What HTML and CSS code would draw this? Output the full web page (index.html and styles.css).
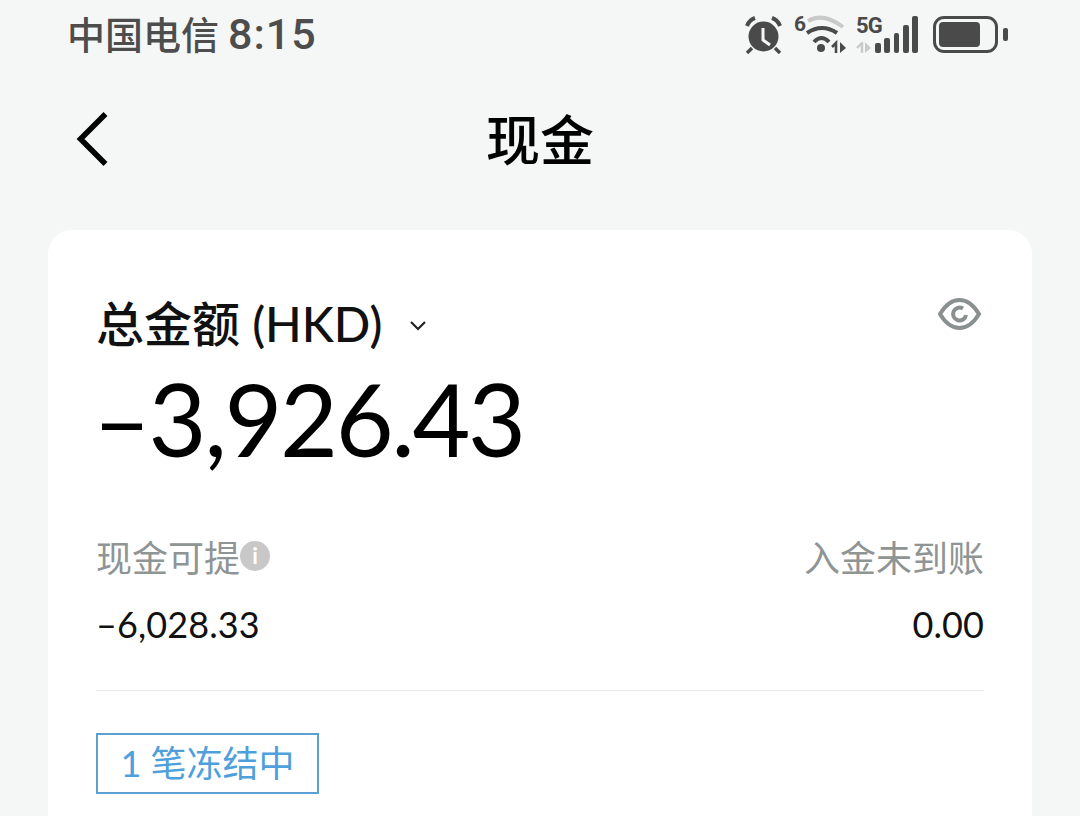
FILE: index.html
```html
<!DOCTYPE html>
<html lang="zh-CN">
<head>
    <meta charset="UTF-8">
    <meta name="viewport" content="width=device-width, initial-scale=1.0">
    <title>现金</title>
    <link rel="stylesheet" href="styles.css">
</head>
<body>

<div class="status">
    <div class="carrier">中国电信<span class="time">8:15</span></div>
    <div class="status-icons">
        <svg class="ico-alarm" width="37" height="38" viewBox="0 0 37 38">
            <circle cx="18.5" cy="20.5" r="15" fill="#4a4a4a"/>
            <path d="M2 10 Q4 4 10 2" fill="none" stroke="#4a4a4a" stroke-width="4"/>
            <path d="M35 10 Q33 4 27 2" fill="none" stroke="#4a4a4a" stroke-width="4"/>
            <path d="M7 32 L2 37 M30 32 L35 37" stroke="#4a4a4a" stroke-width="3.5"/>
            <path d="M18 12 V24 L25 29" fill="none" stroke="#f5f7f7" stroke-width="3"/>
        </svg>
        <div class="wifi">
            <span class="wifi-six">6</span>
            <svg width="44" height="40" viewBox="0 0 44 40">
                <path d="M3 7 Q18 -2 38 13" fill="none" stroke="#c9c9c9" stroke-width="4"/>
                <path d="M2 19 Q17 9 32 19" fill="none" stroke="#4a4a4a" stroke-width="4"/>
                <path d="M9 28 Q16.5 20 24 28" fill="none" stroke="#4a4a4a" stroke-width="4"/>
                <circle cx="16" cy="34" r="4" fill="#4a4a4a"/>
                <path d="M31 39 V29 L27 33" fill="none" stroke="#4a4a4a" stroke-width="2.6"/>
                <path d="M35 28 V39 L41 34 Z" fill="#4a4a4a"/>
            </svg>
        </div>
        <div class="signal">
            <div class="net">
                <span class="five-g">5G</span>
                <svg width="16" height="11" viewBox="0 0 16 11">
                    <path d="M6 11 V1 L1 6" fill="none" stroke="#c9c9c9" stroke-width="2.4"/>
                    <path d="M9 0 V11 L15 6 Z" fill="#c9c9c9"/>
                </svg>
            </div>
            <div class="bars">
                <span class="bar bar-1"></span>
                <span class="bar bar-2"></span>
                <span class="bar bar-3"></span>
                <span class="bar bar-4"></span>
                <span class="bar bar-5"></span>
            </div>
        </div>
        <div class="battery">
            <div class="battery-body"><div class="battery-fill"></div></div>
            <div class="battery-tip"></div>
        </div>
    </div>
</div>

<div class="nav">
    <svg class="back" width="34" height="56" viewBox="0 0 34 56">
        <path d="M30.5 3 L5.5 28 L30.5 53" fill="none" stroke="#000" stroke-width="5.5"/>
    </svg>
    <h1>现金</h1>
</div>

<div class="card">
    <div class="total-row">
        <div class="total-label">总金额 <span class="currency">(HKD)</span>
            <svg class="chevron" width="18" height="12" viewBox="0 0 18 12">
                <path d="M2 2 L9 9 L16 2" fill="none" stroke="#222" stroke-width="2.2"/>
            </svg>
        </div>
        <svg class="eye" width="44" height="32" viewBox="0 0 44 32">
            <path d="M2 16 C8 6 15 2 21.5 2 C28 2 35 6 41 16 C35 26 28 30 21.5 30 C15 30 8 26 2 16 Z" fill="none" stroke="#8a8f8f" stroke-width="4"/>
            <path d="M28 17 A6.5 6.5 0 1 1 25 10.5" fill="none" stroke="#8a8f8f" stroke-width="4"/>
        </svg>
    </div>
    <div class="total">–3,926.43</div>

    <div class="columns">
        <div class="col">
            <div class="col-label">现金可提<span class="info">i</span></div>
            <div class="col-value">–6,028.33</div>
        </div>
        <div class="col col-right">
            <div class="col-label">入金未到账</div>
            <div class="col-value">0.00</div>
        </div>
    </div>

    <div class="line"></div>

    <div class="tag">1 笔冻结中</div>
</div>

</body>
</html>
```

FILE: styles.css
```css
* {
    box-sizing: border-box;
}

html, body {
    height: 816px;
    overflow: hidden;
}

body {
    margin: 0;
    background: #f5f7f7;
    font-family: Lato, "Noto Sans CJK SC", sans-serif;
}

.status {
    height: 70px;
    padding: 0 72px 2px 67px;
    display: flex;
    justify-content: space-between;
    align-items: center;
}

.carrier {
    font-size: 38px;
    font-weight: 500;
    color: #4d4d4d;
    margin-bottom: 4px;
    display: flex;
    align-items: baseline;
}

.time {
    font-family: Roboto, sans-serif;
    font-size: 43px;
    font-weight: 500;
    letter-spacing: 1px;
    margin-left: 9px;
}

.status-icons {
    display: flex;
    align-items: flex-end;
    height: 40px;
}

.ico-alarm {
    margin-right: 12px;
}

.wifi {
    display: flex;
    align-items: flex-start;
    margin-right: 7px;
}

.wifi-six {
    font-family: Roboto, sans-serif;
    font-size: 21px;
    font-weight: 700;
    line-height: 20px;
    width: 11px;
    color: #4a4a4a;
}

.signal {
    display: flex;
    align-items: flex-end;
    margin-right: 15px;
    margin-bottom: 1px;
}

.net {
    display: flex;
    flex-direction: column;
    gap: 7px;
    width: 26px;
    margin-right: -7px;
}

.five-g {
    font-family: Roboto, sans-serif;
    font-size: 22px;
    font-weight: 700;
    line-height: 19px;
    color: #4a4a4a;
    letter-spacing: -1px;
}

.bars {
    display: flex;
    align-items: flex-end;
    gap: 3.5px;
}

.bar {
    width: 5.8px;
    background: #4a4a4a;
    border-radius: 2px;
}

.bar-1 { height: 10px; }
.bar-2 { height: 15px; }
.bar-3 { height: 20px; }
.bar-4 { height: 28px; }
.bar-5 { height: 37px; }

.battery {
    display: flex;
    align-items: center;
    gap: 5px;
    margin-bottom: 1px;
}

.battery-body {
    width: 65px;
    height: 37px;
    border: 3.5px solid #4a4a4a;
    border-radius: 11px;
    padding: 3px;
}

.battery-fill {
    width: 41px;
    height: 100%;
    background: #4a4a4a;
    border-radius: 4px;
}

.battery-tip {
    width: 5px;
    height: 13px;
    background: #4a4a4a;
    border-radius: 2px;
}

.nav {
    height: 142px;
    padding: 0 0 4px 75px;
    display: flex;
    align-items: center;
    position: relative;
}

.nav h1 {
    position: absolute;
    left: 0;
    right: 0;
    top: 33px;
    margin: 0;
    font-size: 54px;
    line-height: 76px;
    font-weight: 500;
    color: #000;
    text-align: center;
}

.card {
    margin: 18px 48px 0;
    height: 586px;
    background: #fff;
    border-radius: 24px 24px 0 0;
    padding: 56px 48px 0;
}

.total-row {
    display: flex;
    justify-content: space-between;
    align-items: flex-start;
}

.total-label {
    font-size: 48px;
    line-height: 76px;
    color: #111;
    font-weight: 500;
    display: flex;
    align-items: center;
    white-space: pre;
}

.chevron {
    margin-left: 27px;
    margin-top: 4px;
}

.eye {
    margin-top: 12px;
    margin-right: 2px;
}

.total {
    font-size: 100px;
    line-height: 120px;
    color: #000;
    letter-spacing: -2.4px;
    margin: -4px 0 0 -3px;
}

.columns {
    display: flex;
    justify-content: space-between;
    margin-top: 51px;
}

.col-right {
    text-align: right;
}

.col-label {
    font-size: 36px;
    line-height: 60px;
    color: #8f9494;
    display: flex;
    align-items: center;
    margin-top: -1px;
}

.col-right .col-label {
    justify-content: flex-end;
}

.info {
    width: 30px;
    height: 30px;
    border-radius: 50%;
    background: #c8c8c8;
    color: #fff;
    font-size: 22px;
    font-weight: 700;
    line-height: 30px;
    text-align: center;
    margin-bottom: 4px;
}

.col-value {
    font-size: 36px;
    line-height: 48px;
    margin-top: 12px;
    color: #111;
    letter-spacing: 0.1px;
}

.line {
    height: 1px;
    background: #e8eaea;
    margin-top: 42px;
}

.tag {
    margin-top: 42px;
    height: 61px;
    width: 223px;
    border: 2px solid #5b9fd3;
    color: #4f9fdc;
    font-size: 36px;
    line-height: 57px;
    text-align: center;
}
```
